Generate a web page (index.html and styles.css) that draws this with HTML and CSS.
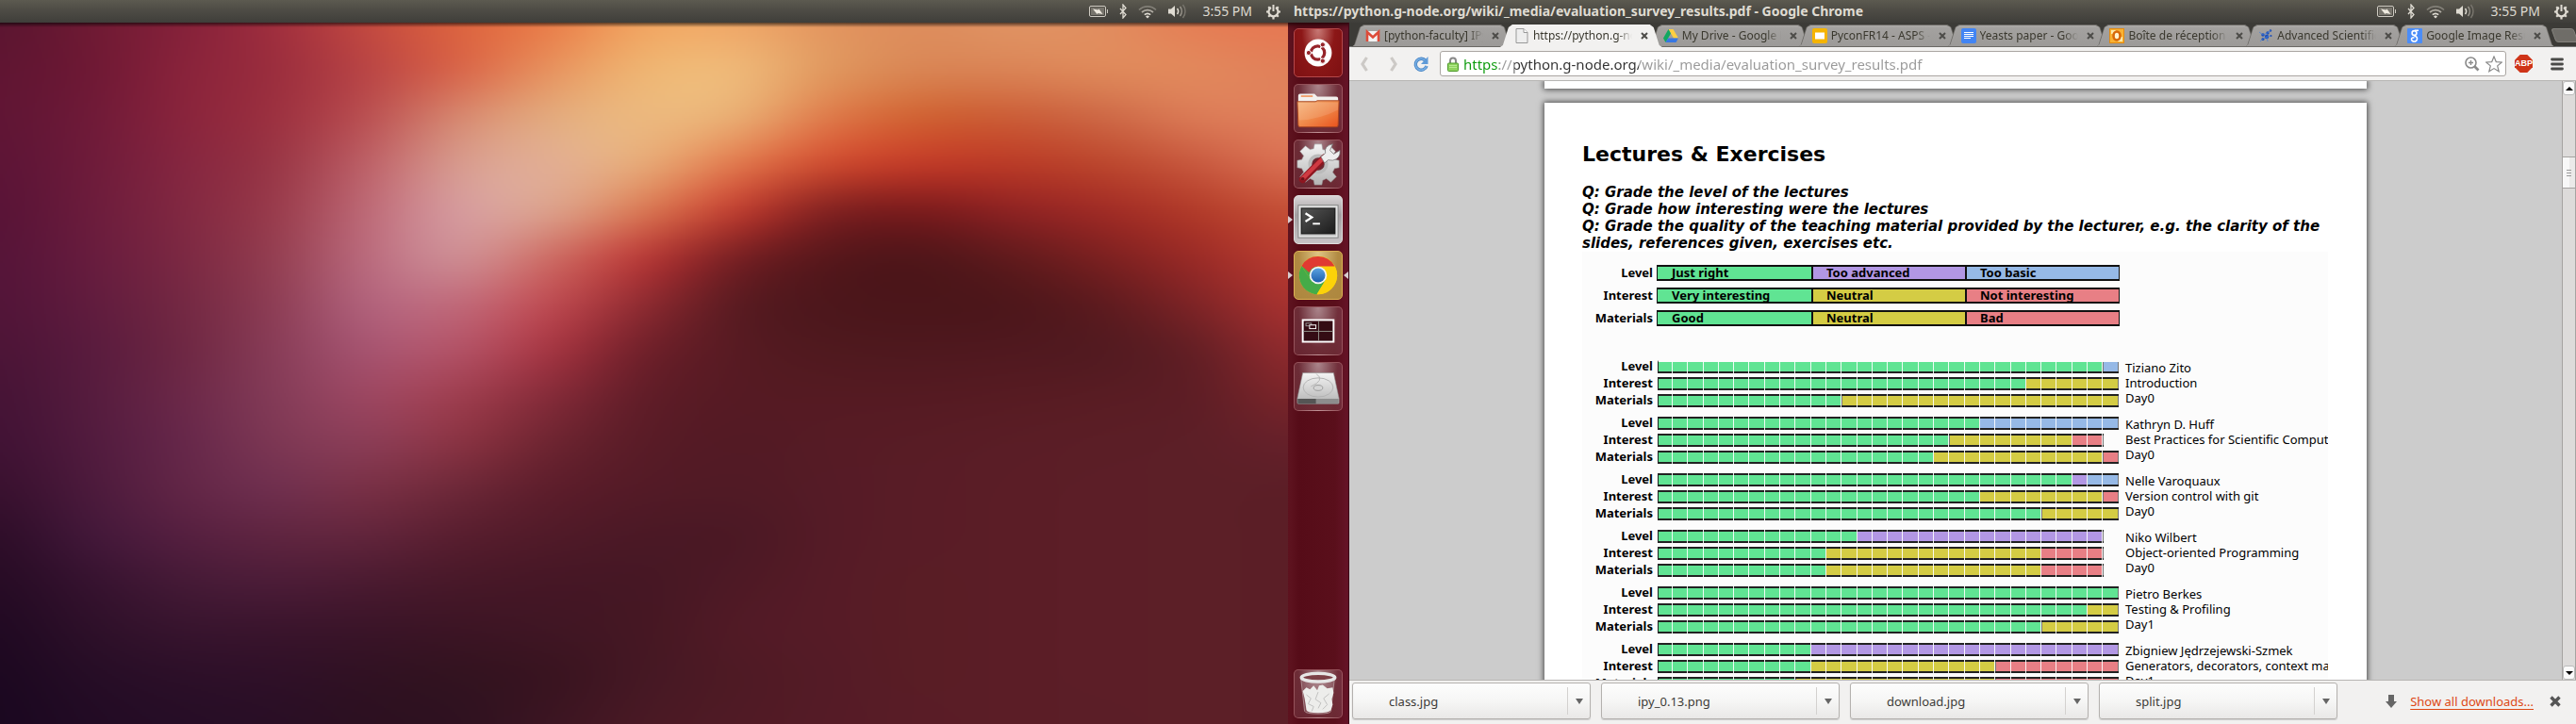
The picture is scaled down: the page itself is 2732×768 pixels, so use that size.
FILE: index.html
```html
<!DOCTYPE html>
<html lang="en">
<head>
<meta charset="utf-8">
<title>evaluation_survey_results.pdf</title>
<link rel="stylesheet" href="styles.css">
<script src="wallpaper.js" defer></script>
</head>
<body>
<svg class="defs" aria-hidden="true">
  <defs>
    <linearGradient id="folder" x1="0" y1="0" x2="1" y2="1"><stop offset="0" stop-color="#f6b57c"/><stop offset=".5" stop-color="#f08a4b"/><stop offset="1" stop-color="#e9521c"/></linearGradient>
    <linearGradient id="metal" x1="0" y1="0" x2="0" y2="1"><stop offset="0" stop-color="#f4f4f4"/><stop offset="1" stop-color="#b4b4b4"/></linearGradient>
    <linearGradient id="screen" x1="0" y1="0" x2="1" y2="1"><stop offset="0" stop-color="#555"/><stop offset="1" stop-color="#1b1b1b"/></linearGradient>
    <linearGradient id="blue" x1="0" y1="0" x2="0" y2="1"><stop offset="0" stop-color="#5ba3e0"/><stop offset="1" stop-color="#1d5fae"/></linearGradient>
    <g id="i-battery" fill="none" stroke="#cfcbc2"><rect x=".5" y="2.500" width="17" height="11" rx="1.500"/><path d="M19.500 6v4"/><rect x="2" y="4" width="14" height="8" fill="#77746c" stroke="none"/><path d="M4 5.500l5.500 1 1-1 4 5.500-5-1-1 1z" fill="#eee9df" stroke="none"/></g>
    <g id="i-bt" fill="none" stroke="#dfdbd2" stroke-width="1.300"><path d="M1 5l6 6.500L4 15V1l3 3.500L1 11"/></g>
    <g id="i-wifi" fill="none" stroke-width="1.700"><path d="M1 6.500a13 13 0 0 1 18 0" stroke="#827f77"/><path d="M4 9a9 9 0 0 1 12 0" stroke="#b0aca3"/><path d="M6.800 11.700a5 5 0 0 1 6.400 0" stroke="#dfdbd2"/><path d="M8 13.500a3 3 0 0 1 4 0l-2 2z" fill="#dfdbd2"/></g>
    <g id="i-vol" fill="none" stroke-width="1.500"><path d="M0 5.500h3l4-3.500v12l-4-3.500H0z" fill="#dfdbd2"/><path d="M9.500 5a5 5 0 0 1 0 6" stroke="#dfdbd2"/><path d="M12.500 3a8 8 0 0 1 0 10" stroke="#9a968d"/><path d="M15.500 1a11 11 0 0 1 0 14" stroke="#77746c"/></g>
    <g id="i-gear" fill="none" stroke="#dfdbd2"><path d="M6 4a5 5 0 1 0 5 0" stroke-width="2.200"/><path d="M8.500 1v7" stroke-width="2"/><path d="M8.500 14v2.500M1 8.500h2.500M13.500 8.500H16M3.200 3.200l1.800 1.800M13.800 3.200L12 5M3.200 13.800L5 12M13.800 13.800L12 12" stroke-width="2.200"/></g>
  </defs>
</svg>

<div class="screens">
  <section class="screen" aria-label="Desktop">
    <header class="panel">
      <div class="indicators">
        <svg width="20" height="16"><use href="#i-battery"/></svg>
        <svg width="8" height="16"><use href="#i-bt"/></svg>
        <svg width="20" height="16"><use href="#i-wifi"/></svg>
        <svg width="20" height="16"><use href="#i-vol"/></svg>
        <time>3:55 PM</time>
        <svg width="17" height="17"><use href="#i-gear"/></svg>
      </div>
    </header>
    <div class="desktop"><canvas class="wallpaper" width="683" height="372"></canvas></div>
  </section>

  <section class="screen" aria-label="Browser">
    <header class="panel">
      <h1 class="window-title">https://python.g-node.org/wiki/_media/evaluation_survey_results.pdf - Google Chrome</h1>
      <div class="indicators">
        <svg width="20" height="16"><use href="#i-battery"/></svg>
        <svg width="8" height="16"><use href="#i-bt"/></svg>
        <svg width="20" height="16"><use href="#i-wifi"/></svg>
        <svg width="20" height="16"><use href="#i-vol"/></svg>
        <time>3:55 PM</time>
        <svg width="17" height="17"><use href="#i-gear"/></svg>
      </div>
    </header>
    <div class="workspace">
      <nav class="launcher" aria-label="Launcher">
        <button class="app app-dash" aria-label="Dash"><svg viewBox="0 0 52 52"><circle cx="26" cy="26" r="15" fill="#fff"/><circle cx="25.500" cy="26" r="7.500" fill="none" stroke="#96242a" stroke-width="3.400"/><g stroke="#fff" stroke-width="1.600"><path d="M25.500 26H13M25.500 26l6.500 11M25.500 26L32 15" stroke-width="1.500"/></g><circle cx="25.500" cy="26" r="5" fill="#fff"/><g fill="#96242a" stroke="#fff" stroke-width="1"><circle cx="15.500" cy="26" r="2.700"/><circle cx="31" cy="17" r="2.700"/><circle cx="31" cy="35" r="2.700"/></g></svg></button>
        <button class="app" aria-label="Files"><svg viewBox="0 0 52 52"><path d="M4 20V12q0-2 2-2h16l3 3h21q2 0 2 2v5z" fill="#f3f0ee"/><path d="M7 12.500h13" stroke="#f0a070" stroke-width="2"/><path d="M3 18.500h20l2-1h24l-1 27q0 2-2 2H6q-2 0-2-2z" fill="url(#folder)" stroke="#a8441e"/><path d="M4 19.500h44v8Q28 38 5 39z" fill="#fff" opacity=".12"/></svg></button>
        <button class="app" aria-label="System Settings"><svg viewBox="0 0 52 52"><path d="M22 4h8l1 6 4 1 5-4 5 5-3 5 2 4 5 1v8l-5 1-2 4 4 5-6 6-5-4-4 2-1 5h-8l-1-5-4-2-5 4-6-6 4-5-2-4-5-1v-8l5-1 2-4-4-5 6-6 5 4 4-1z" fill="url(#metal)" stroke="#999" stroke-width=".6"/><circle cx="26" cy="26" r="9" fill="#6d2730" stroke="#bbb" stroke-width="4"/><path d="M9 43L33 19" stroke="#8d1620" stroke-width="8" stroke-linecap="round"/><path d="M9 42L32 19" stroke="#cf3a42" stroke-width="4.500" stroke-linecap="round"/><circle cx="9" cy="42.500" r="2" fill="#6d1018"/><path d="M29 18l5-4q-2-8 8-10l-3 7 4 4 7-4q1 9-8 11l-5-.5-4 3.500z" fill="#eee" stroke="#777" stroke-width=".8"/></svg></button>
        <button class="app app-terminal app-running" aria-label="Terminal"><svg viewBox="0 0 52 52"><rect x="4" y="10" width="44" height="36" fill="#c4c4c4" stroke="#8a8a8a"/><rect x="5.500" y="11.500" width="41" height="33" fill="none" stroke="#eee"/><rect x="7.500" y="13.500" width="37" height="28" fill="url(#screen)" stroke="#111"/><path d="M12 19l7 4.500-7 4.500" fill="none" stroke="#fff" stroke-width="2.400"/><path d="M20 30.500h8" stroke="#fff" stroke-width="2"/></svg></button>
        <button class="app app-chrome app-running app-active" aria-label="Google Chrome"><svg viewBox="0 0 52 52"><circle cx="26" cy="26" r="21" fill="#fcd209"/><path d="M7.800 15.500A21 21 0 0 0 24.500 47L34 31.500 17 30z" fill="#45ab48"/><path d="M24.500 47A21 21 0 0 0 44.200 16H26l9 14z" fill="#fcd209"/><path d="M7.800 15.500L17.500 31l8.500-15z" fill="#45ab48"/><path d="M7.800 15.500A21 21 0 0 1 44.200 16H26q-7 0-10 7z" fill="#e03a32"/><circle cx="26" cy="26" r="9.600" fill="#f4f4f4"/><circle cx="26" cy="26" r="7.800" fill="url(#blue)"/></svg></button>
        <button class="app" aria-label="Workspace Switcher"><svg viewBox="0 0 52 52"><rect x="9" y="14" width="34" height="24" fill="#340c14" stroke="#fff" stroke-width="2"/><path d="M26.500 15v22M10 26.500h32" stroke="#8f8f86"/><rect x="12.500" y="17.500" width="6" height="3" fill="none" stroke="#999"/><rect x="16.500" y="19.500" width="7" height="4" fill="#340c14" stroke="#fff"/></svg></button>
        <button class="app" aria-label="Disk"><svg viewBox="0 0 52 52"><path d="M9 11h34l6 28v5q0 1-1 1H4q-1 0-1-1v-5z" fill="url(#metal)" stroke="#888" stroke-width=".6"/><path d="M3.500 39.500h45V44q0 1-1 1h-43q-1 0-1-1z" fill="#8d8d8d"/><path d="M3.500 39.500h20v5.500h-19q-1 0-1-1z" fill="#555"/><ellipse cx="26" cy="27" rx="16.500" ry="10.500" fill="none" stroke="#b2b2b2"/><ellipse cx="26" cy="27.500" rx="5" ry="3" fill="#d5d5d5" stroke="#999"/><path d="M24 12q10 7-6 14" fill="none" stroke="#b4b4b4"/></svg></button>
        <button class="app app-trash" aria-label="Trash"><svg viewBox="0 0 52 52"><path d="M7 9l4 36q1 3 15 3t14-3l4-36" fill="#fff" fill-opacity=".16" stroke="#b99da0" stroke-width=".8"/><path d="M9 23l4-4 4 2 4-4 4 5 2-5 4-1 5 4 6-1 1 6-2 7 1 6-2 6q-2 3-14 3t-13-3l-1-7-1-6z" fill="#ededeb"/><path d="M13 27l5 4-3 6 6 3-2 5M26 24l-3 8 6 4-3 6M38 26l-6 5 4 7-5 5" fill="none" stroke="#c0c0be"/><ellipse cx="26" cy="8" rx="18.500" ry="4.500" fill="#7c4047" stroke="#e6e6e6" stroke-width="3.500"/></svg></button>
      </nav>

      <main class="browser">
        <div class="tabs" role="tablist">
          <div class="tab" role="tab"><svg class="fav" viewBox="0 0 16 16"><path d="M1 3h14v11H1z" fill="#f2f2f2"/><path d="M2 14V4l6 5.500L14 4v10" fill="none" stroke="#dd4b39" stroke-width="2.600"/></svg><span class="tab-text">[python-faculty] IPython</span><button class="close" aria-label="Close tab"><svg viewBox="0 0 8 8"><path d="M1 1l6 6M7 1L1 7"/></svg></button></div>
          <div class="tab tab-current" role="tab" aria-selected="true"><svg class="fav" viewBox="0 0 16 16"><path d="M2 .5h8l4 4v11H2z" fill="#eee" stroke="#999"/><path d="M10 .5v4h4" fill="#fff" stroke="#999"/></svg><span class="tab-text">https://python.g-node.org</span><button class="close" aria-label="Close tab"><svg viewBox="0 0 8 8"><path d="M1 1l6 6M7 1L1 7"/></svg></button></div>
          <div class="tab" role="tab"><svg class="fav" viewBox="0 0 16 16"><path d="M5.500 1h5l5.500 9.500h-5z" fill="#ffcf41"/><path d="M5.500 1L8 5.500 2.500 15 0 10.500z" fill="#11a861"/><path d="M2.500 15L5 10.500h11L13.500 15z" fill="#3777e3"/></svg><span class="tab-text">My Drive - Google Drive</span><button class="close" aria-label="Close tab"><svg viewBox="0 0 8 8"><path d="M1 1l6 6M7 1L1 7"/></svg></button></div>
          <div class="tab" role="tab"><svg class="fav" viewBox="0 0 16 16"><rect width="16" height="16" rx="2" fill="#f5b400"/><path d="M3 4.500h10v7H3z" fill="#fff"/></svg><span class="tab-text">PyconFR14 - ASPS - Google</span><button class="close" aria-label="Close tab"><svg viewBox="0 0 8 8"><path d="M1 1l6 6M7 1L1 7"/></svg></button></div>
          <div class="tab" role="tab"><svg class="fav" viewBox="0 0 16 16"><rect width="16" height="16" rx="2" fill="#4285f4"/><path d="M3 4.500h10M3 6.500h10M3 8.500h10M3 10.500h7" stroke="#fff"/></svg><span class="tab-text">Yeasts paper - Google Docs</span><button class="close" aria-label="Close tab"><svg viewBox="0 0 8 8"><path d="M1 1l6 6M7 1L1 7"/></svg></button></div>
          <div class="tab" role="tab"><svg class="fav" viewBox="0 0 16 16"><rect x=".5" y=".5" width="15" height="15" fill="#f9b233" stroke="#e28a10"/><path d="M2 2h5v4H2zM9 9h5v5H9z" fill="#fde9a8"/><ellipse cx="8" cy="8" rx="3.500" ry="4.500" fill="#fff3cf" stroke="#d8690a" stroke-width="2.600"/></svg><span class="tab-text">Boîte de réception (3)</span><button class="close" aria-label="Close tab"><svg viewBox="0 0 8 8"><path d="M1 1l6 6M7 1L1 7"/></svg></button></div>
          <div class="tab" role="tab"><svg class="fav" viewBox="0 0 16 16"><g fill="#1d4fb4"><circle cx="5" cy="7" r="1.800"/><circle cx="10" cy="5" r="1.700"/><circle cx="9" cy="9" r="2.200"/><circle cx="5" cy="11.500" r="1.500"/><circle cx="13" cy="2.500" r="1.200"/><circle cx="13.500" cy="8" r="1"/></g><path d="M1 4l4 3 5-2 3-3M2 14l3-3 4-2 4-1M9 9l1 5" stroke="#3d7be0" stroke-width=".7" fill="none"/></svg><span class="tab-text">Advanced Scientific</span><button class="close" aria-label="Close tab"><svg viewBox="0 0 8 8"><path d="M1 1l6 6M7 1L1 7"/></svg></button></div>
          <div class="tab" role="tab"><svg class="fav" viewBox="0 0 16 16"><rect width="16" height="16" rx="1" fill="#4b8df8"/><circle cx="7.500" cy="5" r="2.400" fill="none" stroke="#fff" stroke-width="1.600"/><path d="M8 2.200h4M7 7.500q4 1.500 3.500 4t-3 2.500-3-2 3-2.200" fill="none" stroke="#fff" stroke-width="1.500"/></svg><span class="tab-text">Google Image Results</span><button class="close" aria-label="Close tab"><svg viewBox="0 0 8 8"><path d="M1 1l6 6M7 1L1 7"/></svg></button></div>
          <button class="new-tab" aria-label="New tab"></button>
        </div>

        <div class="toolbar">
          <button class="tool" aria-label="Back"><svg viewBox="0 0 20 20"><path d="M12.500 3L8 10l4.500 7" fill="none" stroke="#ccc9c6" stroke-width="3.200"/></svg></button>
          <button class="tool tool-next" aria-label="Forward"><svg viewBox="0 0 20 20"><path d="M7.500 3l4.500 7-4.500 7" fill="none" stroke="#ccc9c6" stroke-width="3.200"/></svg></button>
          <button class="tool" aria-label="Reload"><svg viewBox="0 0 20 20"><path d="M15 6.500A6 6 0 1 0 16 12" fill="none" stroke="#4a86c5" stroke-width="3.400"/><path d="M15 6.500A6 6 0 1 0 16 12" fill="none" stroke="#78afe4" stroke-width="1.600"/><path d="M17.500 2v8H10z" fill="#5f9bd8"/></svg></button>
          <div class="omnibox">
            <svg class="lock" viewBox="0 0 12 16"><path d="M3 8V4.500a3 3 0 0 1 6 0V8" fill="none" stroke="#888" stroke-width="2"/><rect x=".5" y="7" width="11" height="8.500" rx="1" fill="#8fd35f" stroke="#4f9a2c"/><path d="M2 9.500h8M2 11.500h8" stroke="#b6ea90"/></svg>
            <input class="url" type="text" aria-label="Address" value="https://python.g-node.org/wiki/_media/evaluation_survey_results.pdf">
            <button class="mini" aria-label="Zoom"><svg viewBox="0 0 18 18"><circle cx="7.500" cy="7.500" r="5.500" fill="none" stroke="#8a8a8a" stroke-width="1.600"/><path d="M5 7.500h5M7.500 5v5" stroke="#8a8a8a" stroke-width="1.400"/><path d="M11.500 11.500l4 4" stroke="#8a8a8a" stroke-width="2.600"/></svg></button>
            <button class="mini" aria-label="Bookmark"><svg viewBox="0 0 18 18"><path d="M9 1l2.300 5.600 6 .4-4.600 3.900 1.500 5.900L9 13.600l-5.200 3.200 1.500-5.900L.700 7l6-.4z" fill="#fff" stroke="#8a8a8a" stroke-width="1.200"/></svg></button>
          </div>
          <button class="abp" aria-label="Adblock Plus">ABP</button>
          <button class="menu" aria-label="Menu"><svg viewBox="0 0 14 14"><path d="M1.500 2h11M1.500 7h11M1.500 12h11" stroke="#4a4a48" stroke-width="2.800" stroke-linecap="round"/></svg></button>
        </div>

        <div class="viewer">
          <div class="pages">
            <div class="sheet sheet-previous"></div>
            <article class="sheet sheet-survey">
              <h2>Lectures &amp; Exercises</h2>
              <p class="questions">Q: Grade the level of the lectures<br>Q: Grade how interesting were the lectures<br>Q: Grade the quality of the teaching material provided by the lecturer, e.g. the clarity of the slides, references given, exercises etc.</p>
              <div class="chart">
                <div class="legend">
                  <span class="label">Level</span><div class="keys"><span class="g">Just right</span><span class="p">Too advanced</span><span class="b">Too basic</span></div>
                  <span class="label">Interest</span><div class="keys"><span class="g">Very interesting</span><span class="y">Neutral</span><span class="r">Not interesting</span></div>
                  <span class="label">Materials</span><div class="keys"><span class="g">Good</span><span class="y">Neutral</span><span class="r">Bad</span></div>
                </div>
                <div class="group">
                  <span class="label">Level</span><div class="bar bar-open"><i class="g" style="--n:29"></i><i class="b" style="--n:1"></i></div>
                  <span class="label">Interest</span><div class="bar"><i class="g" style="--n:24"></i><i class="y" style="--n:6"></i></div>
                  <span class="label">Materials</span><div class="bar"><i class="g" style="--n:12"></i><i class="y" style="--n:18"></i></div>
                  <p class="talk">Tiziano Zito<br>Introduction<br>Day0</p>
                </div>
                <div class="group">
                  <span class="label">Level</span><div class="bar"><i class="g" style="--n:21"></i><i class="b" style="--n:9"></i></div>
                  <span class="label">Interest</span><div class="bar"><i class="g" style="--n:19"></i><i class="y" style="--n:8"></i><i class="r" style="--n:2"></i></div>
                  <span class="label">Materials</span><div class="bar"><i class="g" style="--n:18"></i><i class="y" style="--n:11"></i><i class="r" style="--n:1"></i></div>
                  <p class="talk">Kathryn D. Huff<br>Best Practices for Scientific Computing<br>Day0</p>
                </div>
                <div class="group">
                  <span class="label">Level</span><div class="bar"><i class="g" style="--n:27"></i><i class="p" style="--n:1"></i><i class="b" style="--n:2"></i></div>
                  <span class="label">Interest</span><div class="bar"><i class="g" style="--n:21"></i><i class="y" style="--n:8"></i><i class="r" style="--n:1"></i></div>
                  <span class="label">Materials</span><div class="bar"><i class="g" style="--n:25"></i><i class="y" style="--n:5"></i></div>
                  <p class="talk">Nelle Varoquaux<br>Version control with git<br>Day0</p>
                </div>
                <div class="group">
                  <span class="label">Level</span><div class="bar"><i class="g" style="--n:13"></i><i class="p" style="--n:16"></i></div>
                  <span class="label">Interest</span><div class="bar"><i class="g" style="--n:11"></i><i class="y" style="--n:14"></i><i class="r" style="--n:4"></i></div>
                  <span class="label">Materials</span><div class="bar"><i class="g" style="--n:11"></i><i class="y" style="--n:14"></i><i class="r" style="--n:4"></i></div>
                  <p class="talk">Niko Wilbert<br>Object-oriented Programming<br>Day0</p>
                </div>
                <div class="group">
                  <span class="label">Level</span><div class="bar"><i class="g" style="--n:30"></i></div>
                  <span class="label">Interest</span><div class="bar"><i class="g" style="--n:28"></i><i class="y" style="--n:2"></i></div>
                  <span class="label">Materials</span><div class="bar"><i class="g" style="--n:25"></i><i class="y" style="--n:5"></i></div>
                  <p class="talk">Pietro Berkes<br>Testing &amp; Profiling<br>Day1</p>
                </div>
                <div class="group">
                  <span class="label">Level</span><div class="bar"><i class="g" style="--n:10"></i><i class="p" style="--n:20"></i></div>
                  <span class="label">Interest</span><div class="bar"><i class="g" style="--n:10"></i><i class="y" style="--n:12"></i><i class="r" style="--n:8"></i></div>
                  <span class="label">Materials</span><div class="bar"><i class="g" style="--n:9"></i><i class="y" style="--n:13"></i><i class="r" style="--n:8"></i></div>
                  <p class="talk">Zbigniew Jędrzejewski-Szmek<br>Generators, decorators, context managers<br>Day1</p>
                </div>
              </div>
            </article>
          </div>
          <div class="scrollbar">
            <button class="arrow arrow-up" aria-label="Scroll up"></button>
            <div class="track"><div class="thumb"></div></div>
            <button class="arrow arrow-down" aria-label="Scroll down"></button>
          </div>
        </div>

        <footer class="downloads">
          <div class="download"><button class="file">class.jpg</button><button class="more" aria-label="Options for class.jpg"></button></div>
          <div class="download"><button class="file">ipy_0.13.png</button><button class="more" aria-label="Options for ipy_0.13.png"></button></div>
          <div class="download"><button class="file">download.jpg</button><button class="more" aria-label="Options for download.jpg"></button></div>
          <div class="download"><button class="file">split.jpg</button><button class="more" aria-label="Options for split.jpg"></button></div>
          <div class="all">
            <svg width="12" height="14" viewBox="0 0 12 14"><path d="M3 0h6v7h3l-6 7-6-7h3z" fill="#666"/></svg>
            <a href="#">Show all downloads...</a>
            <button class="dismiss" aria-label="Close downloads bar"><svg viewBox="0 0 12 12"><path d="M1.500 1.500l9 9M10.500 1.500l-9 9" stroke="#555" stroke-width="3.400"/></svg></button>
          </div>
        </footer>
      </main>
    </div>
  </section>
</div>
</body>
</html>
```
FILE: styles.css
```css
* { box-sizing: border-box; }
body { margin: 0; font: 13px/16px "Noto Sans", "Open Sans", sans-serif; color: #3c3b37; overflow: hidden; }
button { padding: 0; border: 0; background: none; font: inherit; color: inherit; }
svg { display: block; }
.defs { position: absolute; width: 0; height: 0; }

.screens { display: grid; grid-template-columns: 1fr 1fr; height: 100vh; }
.screen { display: flex; flex-direction: column; min-width: 0; min-height: 0; }

/* top panel */
.panel { flex: none; display: flex; align-items: center; height: 24px; padding: 0 7px 0 6px; background: linear-gradient(#5c5a50, #4f4d46 40%, #3f3e3a); color: #dfdbd2; }
.window-title { margin: 0; font-size: 14px; line-height: 24px; font-weight: 700; white-space: nowrap; }
.indicators { display: flex; align-items: center; gap: 12px; margin-left: auto; }
.indicators time { font-size: 14px; line-height: 24px; margin: 0 2px 0 4px; }

/* desktop */
.desktop { position: relative; flex: 1; min-height: 0; background: #551a22; }
.desktop::after { content: ""; position: absolute; inset: 0 0 auto; height: 5px; background: linear-gradient(rgba(0,0,0,.6), transparent); }
.wallpaper { display: block; width: 100%; height: 100%; }

.workspace { flex: 1; display: flex; min-height: 0; }

/* launcher */
.launcher { flex: none; display: flex; flex-direction: column; align-items: center; gap: 7px; width: 65px; padding: 6px 0; border-right: 1px solid #3c0a18; background: linear-gradient(90deg, #5f1420, #560c18 12px, #5a0f1b 50px, #661428); box-shadow: inset 0 6px 5px -4px #200408; }
.app { position: relative; flex: none; width: 52px; height: 52px; border: 1px solid rgba(255,190,190,.28); border-radius: 5px; background: radial-gradient(ellipse at 50% 0, rgba(255,255,255,.5), rgba(255,255,255,.13) 60%, rgba(255,255,255,.1)); }
.app > svg { width: 50px; height: 50px; }
.app-dash { background: radial-gradient(ellipse at 50% 0, #c87a76, #8c1717 50%, #7d1012); border-color: #b5484a; }
.app-terminal { background: linear-gradient(#d9d5d6, #a49fa2 40%, #c7c3c5); border-color: #e0dede; }
.app-chrome { background: radial-gradient(ellipse at 50% 0, #dfc585, #b18a42 60%, #ad873e); border-color: #dcb154; }
.app-running::before { content: ""; position: absolute; left: -7px; top: 21px; border: 4px solid transparent; border-left: 5px solid #d8cdd0; border-right: 0; }
.app-active::after { content: ""; position: absolute; right: -7px; top: 21px; border: 4px solid transparent; border-right: 5px solid #d8cdd0; border-left: 0; }
.app-trash { margin-top: auto; }

/* tabs */
.browser { flex: 1; display: flex; flex-direction: column; min-width: 0; background: #f2f1f0; }
.tabs { flex: none; display: flex; align-items: flex-end; height: 26px; padding-left: 2px; background: #3c3b37; box-shadow: inset 0 -1px #777; }
.tab { position: relative; flex: 0 1 172px; min-width: 0; display: flex; align-items: center; height: 24px; margin-right: -14px; padding: 0 15px; color: #3a382e; background: #6b6965; clip-path: polygon(0 100%, 3px 92%, 9px 12%, 13px 0, calc(100% - 13px) 0, calc(100% - 9px) 12%, calc(100% - 3px) 92%, 100% 100%); }
.tab::before { content: ""; position: absolute; inset: 0 0 1px; background: linear-gradient(#b0aeac, #a3a19f 4px, #9c9a98); clip-path: polygon(1px 100%, 4px 92%, 10px 12%, 14px 1px, calc(100% - 14px) 1px, calc(100% - 10px) 12%, calc(100% - 4px) 92%, calc(100% - 1px) 100%); }
.tab > * { position: relative; }
.tab-current { z-index: 1; background: #f2f1f0; }
.tab-current::before { background: #f2f1f0; inset: 0; }
.fav { flex: none; width: 16px; height: 16px; margin-right: 4px; }
.tab-text { flex: 1; min-width: 0; overflow: hidden; white-space: nowrap; font-size: 12px; line-height: 24px; -webkit-mask-image: linear-gradient(90deg, #000 calc(100% - 16px), transparent); mask-image: linear-gradient(90deg, #000 calc(100% - 16px), transparent); }
.close { flex: none; width: 8px; height: 8px; margin-left: 9px; }
.close svg { width: 8px; height: 8px; fill: none; stroke: #4d4c49; stroke-width: 2; }
.new-tab { flex: none; align-self: center; width: 24px; height: 15px; margin-left: 12px; border: 1px solid #85837e; border-radius: 3px; background: #6f6d68; transform: skewX(20deg); }

/* toolbar */
.toolbar { flex: none; display: flex; align-items: center; height: 36px; padding: 0 13px 0 6px; border-bottom: 1px solid #b7b5b3; }
.tool { flex: none; width: 20px; height: 20px; margin-right: 7px; }
.tool svg { width: 20px; height: 20px; }
.tool-next { margin: 0 9px 0 4px; }
.omnibox { flex: 1; display: flex; align-items: center; gap: 5px; min-width: 0; height: 27px; margin-left: 3px; padding: 0 3px 0 7px; border: 1px solid #aaa6a2; border-radius: 3px; background: #fff; }
.lock { flex: none; width: 12px; height: 16px; }
.url { flex: 1; min-width: 0; height: 24px; padding: 0; border: 0; outline: 0; font: 15px/24px "Noto Sans", "Open Sans", sans-serif; color: transparent; background: linear-gradient(90deg, #0a9a0a 38px, #999 38px 54px, #333 54px 186px, #999 186px); -webkit-background-clip: text; background-clip: text; }
.mini, .mini svg { flex: none; width: 18px; height: 18px; }
.abp { flex: none; width: 19px; height: 19px; margin: 0 19px 0 9px; background: #cf3418; color: #fff; font: 700 9px/19px "Liberation Sans", sans-serif; text-align: center; clip-path: polygon(30% 0, 70% 0, 100% 30%, 100% 70%, 70% 100%, 30% 100%, 0 70%, 0 30%); }
.menu, .menu svg { flex: none; width: 14px; height: 14px; }

/* document */
.viewer { flex: 1; display: flex; min-height: 0; background: #ccc; }
.pages { flex: 1; display: flex; flex-direction: column; align-items: center; gap: 15px; min-width: 0; overflow: hidden; }
.sheet { flex: none; width: min(872px, 100%); background: #fff; box-shadow: 0 0 6px 1px rgba(0,0,0,.65); }
.sheet-previous { height: 8px; }
.sheet-survey { padding: 40px 41px 0 40px; color: #000; }
.sheet h2 { margin: 0 0 16px; font: 700 22px/30px "DejaVu Sans", sans-serif; }
.questions { margin: 0; font: italic 700 15px/18px "DejaVu Sans", sans-serif; }
.chart { padding: 14px 0 0; background: #fcfcfc; overflow: hidden; }
.legend, .group { display: grid; grid-template-columns: 75px 491px 1fr; column-gap: 4px; }
.legend { row-gap: 7px; margin-bottom: 36px; font-weight: 700; font-size: 13px; line-height: 17px; }
.label { grid-column: 1; text-align: right; font-weight: 700; }
.keys { grid-column: 2; display: grid; grid-template-columns: repeat(3, 1fr); height: 17px; border: solid #111; border-width: 2px 1px; }
.keys span { padding-left: 15px; line-height: 13px; }
.keys span + span { border-left: 2px solid #111; padding-left: 14px; }
.g { background: #60e493; }
.y { background: #d4cc44; }
.r { background: #e87f85; }
.p { background: #b297e4; }
.b { background: #96b9e6; }
.group { grid-template-rows: 14px 14px 14px; row-gap: 4px; margin-bottom: 10px; }
.group .label { line-height: 13px; }
.bar { position: relative; grid-column: 2; display: flex; width: 489px; height: 14px; margin-left: 1px; }
.bar i { width: calc(100% * var(--n) / 30); border: solid #222; border-width: 2px 0; box-shadow: inset -1px 0 #777; }
.bar i:first-child { border-left: 1px solid #222; }
.bar-open i { border-top-color: transparent; background-clip: padding-box; }
.bar::after { content: ""; position: absolute; inset: 0 2px 0 0; background: repeating-linear-gradient(90deg, transparent 0 15px, rgba(255,255,255,.9) 15px 16px, transparent 16px calc(489px / 30)); }
.talk { grid-column: 3; grid-row: 1 / 4; margin: 0 0 0 2px; white-space: nowrap; }

.scrollbar { flex: none; display: flex; flex-direction: column; width: 15px; border: 1px solid #a5a3a1; border-width: 0 1px; background: #dddbda; }
.arrow { flex: none; display: grid; place-items: center; height: 15px; border: 1px solid #bbb; border-radius: 3px; background: #fafafa; }
.arrow::before { content: ""; border: 4px solid transparent; }
.arrow-up::before { border-top: 0; border-bottom-color: #000; }
.arrow-down::before { border-bottom: 0; border-top-color: #000; }
.track { flex: 1; padding-top: 65px; }
.thumb { height: 34px; border: solid #a5a3a1; border-width: 1px 0; background: linear-gradient(#999, #999) 50% 13px / 5px 1px no-repeat, linear-gradient(#999, #999) 50% 16px / 5px 1px no-repeat, linear-gradient(#999, #999) 50% 19px / 5px 1px no-repeat, linear-gradient(90deg, #f8f8f8 50%, #ebeae9 50%); }

/* downloads */
.downloads { flex: none; display: flex; align-items: center; gap: 11px; height: 47px; padding: 0 16px 3px 3px; border-top: 1px solid #b7b5b3; }
.download { flex: 0 1 253px; min-width: 0; display: flex; height: 39px; border: 1px solid #b4b1ae; border-radius: 3px; background: linear-gradient(#fdfdfd, #f6f6f5 50%, #e9e8e7); box-shadow: 0 1px 1px #ccc; }
.file { flex: 1; min-width: 0; padding-left: 38px; text-align: left; color: #3c3b37; }
.more { flex: none; display: grid; place-items: center; width: 24px; margin: 4px 0; border-left: 1px solid #d3d1cf; }
.more::before { content: ""; border: 4px solid transparent; border-top: 6px solid #666; border-bottom: 0; }
.all { display: flex; align-items: center; gap: 14px; margin-left: auto; }
.all a { color: #dd4814; text-decoration: underline; text-underline-offset: 3px; white-space: nowrap; }
.dismiss, .dismiss svg { width: 12px; height: 12px; }
.dismiss { margin-left: 3px; }
```
FILE: wallpaper.js
```js
// Colour mesh for the desktop background, interpolated smoothly over the canvas.
const mesh = [
  "5a1530 6f1a33 85213a a02e3e c44a40 dd643e ea7c48 f2a762 f0a868 e3955f dd8c5c e09464 e18e60 e57d54 e77752",
  "5f1532 6e1834 8a233b 9a2d3d b94445 da6347 e8945f efb874 f0bd7c e09a60 d98655 db8557 e08c5c e28a5d e0805a",
  "5f1534 6f1a38 8a243c 9c303f bb4f51 d88b72 e3ae80 edbb80 eab478 e07a4a d0612f cb5c36 cd6846 dd7d58 e0805c",
  "5c1436 6e1b3a 862640 983544 bf6168 d9a092 e3b097 e8b07a e4794c d34a2e c63a28 bc3a26 bc462c c8583e dc7255",
  "581336 6c1c3c 822841 993a4a bf6b78 d8a0a4 dda890 dd7b52 c63a2e 7d1f20 78191b 8f2223 a12a25 b23a28 c55036",
  "551438 681c3e 7c2842 943e50 bd6d80 d0959a cf6c62 bd3534 741e22 54161a 4c1519 5f1a1c 7c2020 9b2a26 ba3d30",
  "521438 611c3e 742842 8e3d54 b46680 c26c7c c24a50 8f2a30 561a20 4b161b 4a1519 4b161a 5c1a1e 7f2426 ab3330",
  "4c1436 591b3e 6e2742 893d58 a85673 b55468 a83440 6e1f29 561a22 4f191e 4e181e 50181f 501a20 611e24 922b2e",
  "451335 561c3e 6c2848 843c58 9f4863 a03e4e 842a38 5f1c27 551a23 551a22 551a22 571b22 591c23 5c1d25 7c2529",
  "401234 521b3e 66274a 7e3854 8c3e58 8c3342 6c2430 581b26 521a24 561b25 581c25 5a1d26 5b1e26 5c1f27 66202a",
  "38102e 4c1a3c 632646 703050 7a3045 6c2838 5c1c2a 531a26 501a25 551b26 591c26 5b1d26 5c1e27 5c1f27 5b1e26",
  "2d0d28 43183a 561f40 602540 62253c 581d2e 501a28 4a1825 4a1824 551b26 591c26 5b1d26 5c1e27 5c1f27 5b1e26",
  "260b24 36122f 451a36 4c1c38 4a1a30 471828 451625 451724 4e1925 561b26 591d25 5b1d26 5c1e27 5c1f27 5b1e26",
  "200922 2e1029 38142e 3a142c 3a1428 3c1424 401624 451722 521a26 561b26 591d25 5b1d26 5c1e27 5c1f27 5b1e26",
  "1c0820 260d26 2c0f28 2f1028 301122 32131f 38131f 451824 4e1a24 541b26 591d25 5b1d26 5c1e27 5c1f27 5b1e26",
  "1a0720 220b24 260d26 290e25 2c1020 2e1120 3c1522 4a1924 501a25 551b26 591c26 5b1d26 5b1e27 5c1f27 5b1e26"
].map(row => row.split(" ").map(hex => [0, 2, 4].map(i => parseInt(hex.slice(i, i + 2), 16))));

// Blend of B-spline and Catmull-Rom weights: soft transitions with no visible cells.
function weights(t) {
  const u = 1 - t;
  const spline = [u ** 3 / 6, (3 * t ** 3 - 6 * t ** 2 + 4) / 6, (3 * u ** 3 - 6 * u ** 2 + 4) / 6, t ** 3 / 6];
  const cubic = [
    (-t + 2 * t * t - t ** 3) / 2, (2 - 5 * t * t + 3 * t ** 3) / 2,
    (t + 4 * t * t - 3 * t ** 3) / 2, (t ** 3 - t * t) / 2
  ];
  return spline.map((s, i) => s * 0.6 + cubic[i] * 0.4);
}

const canvas = document.querySelector(".wallpaper");
const ctx = canvas.getContext("2d");
const { width, height } = canvas;
const image = ctx.createImageData(width, height);
const rows = mesh.length, cols = mesh[0].length;
const clamp = (v, max) => Math.max(0, Math.min(max, v));

for (let y = 0; y < height; y++) {
  const gy = y / (height - 1) * (rows - 1), iy = Math.floor(gy), wy = weights(gy - iy);
  for (let x = 0; x < width; x++) {
    const gx = x / (width - 1) * (cols - 1), ix = Math.floor(gx), wx = weights(gx - ix);
    const at = (y * width + x) * 4;
    for (let c = 0; c < 3; c++) {
      let sum = 0;
      for (let j = 0; j < 4; j++)
        for (let i = 0; i < 4; i++)
          sum += wy[j] * wx[i] * mesh[clamp(iy + j - 1, rows - 1)][clamp(ix + i - 1, cols - 1)][c];
      image.data[at + c] = sum;
    }
    image.data[at + 3] = 255;
  }
}
ctx.putImageData(image, 0, 0);
```
